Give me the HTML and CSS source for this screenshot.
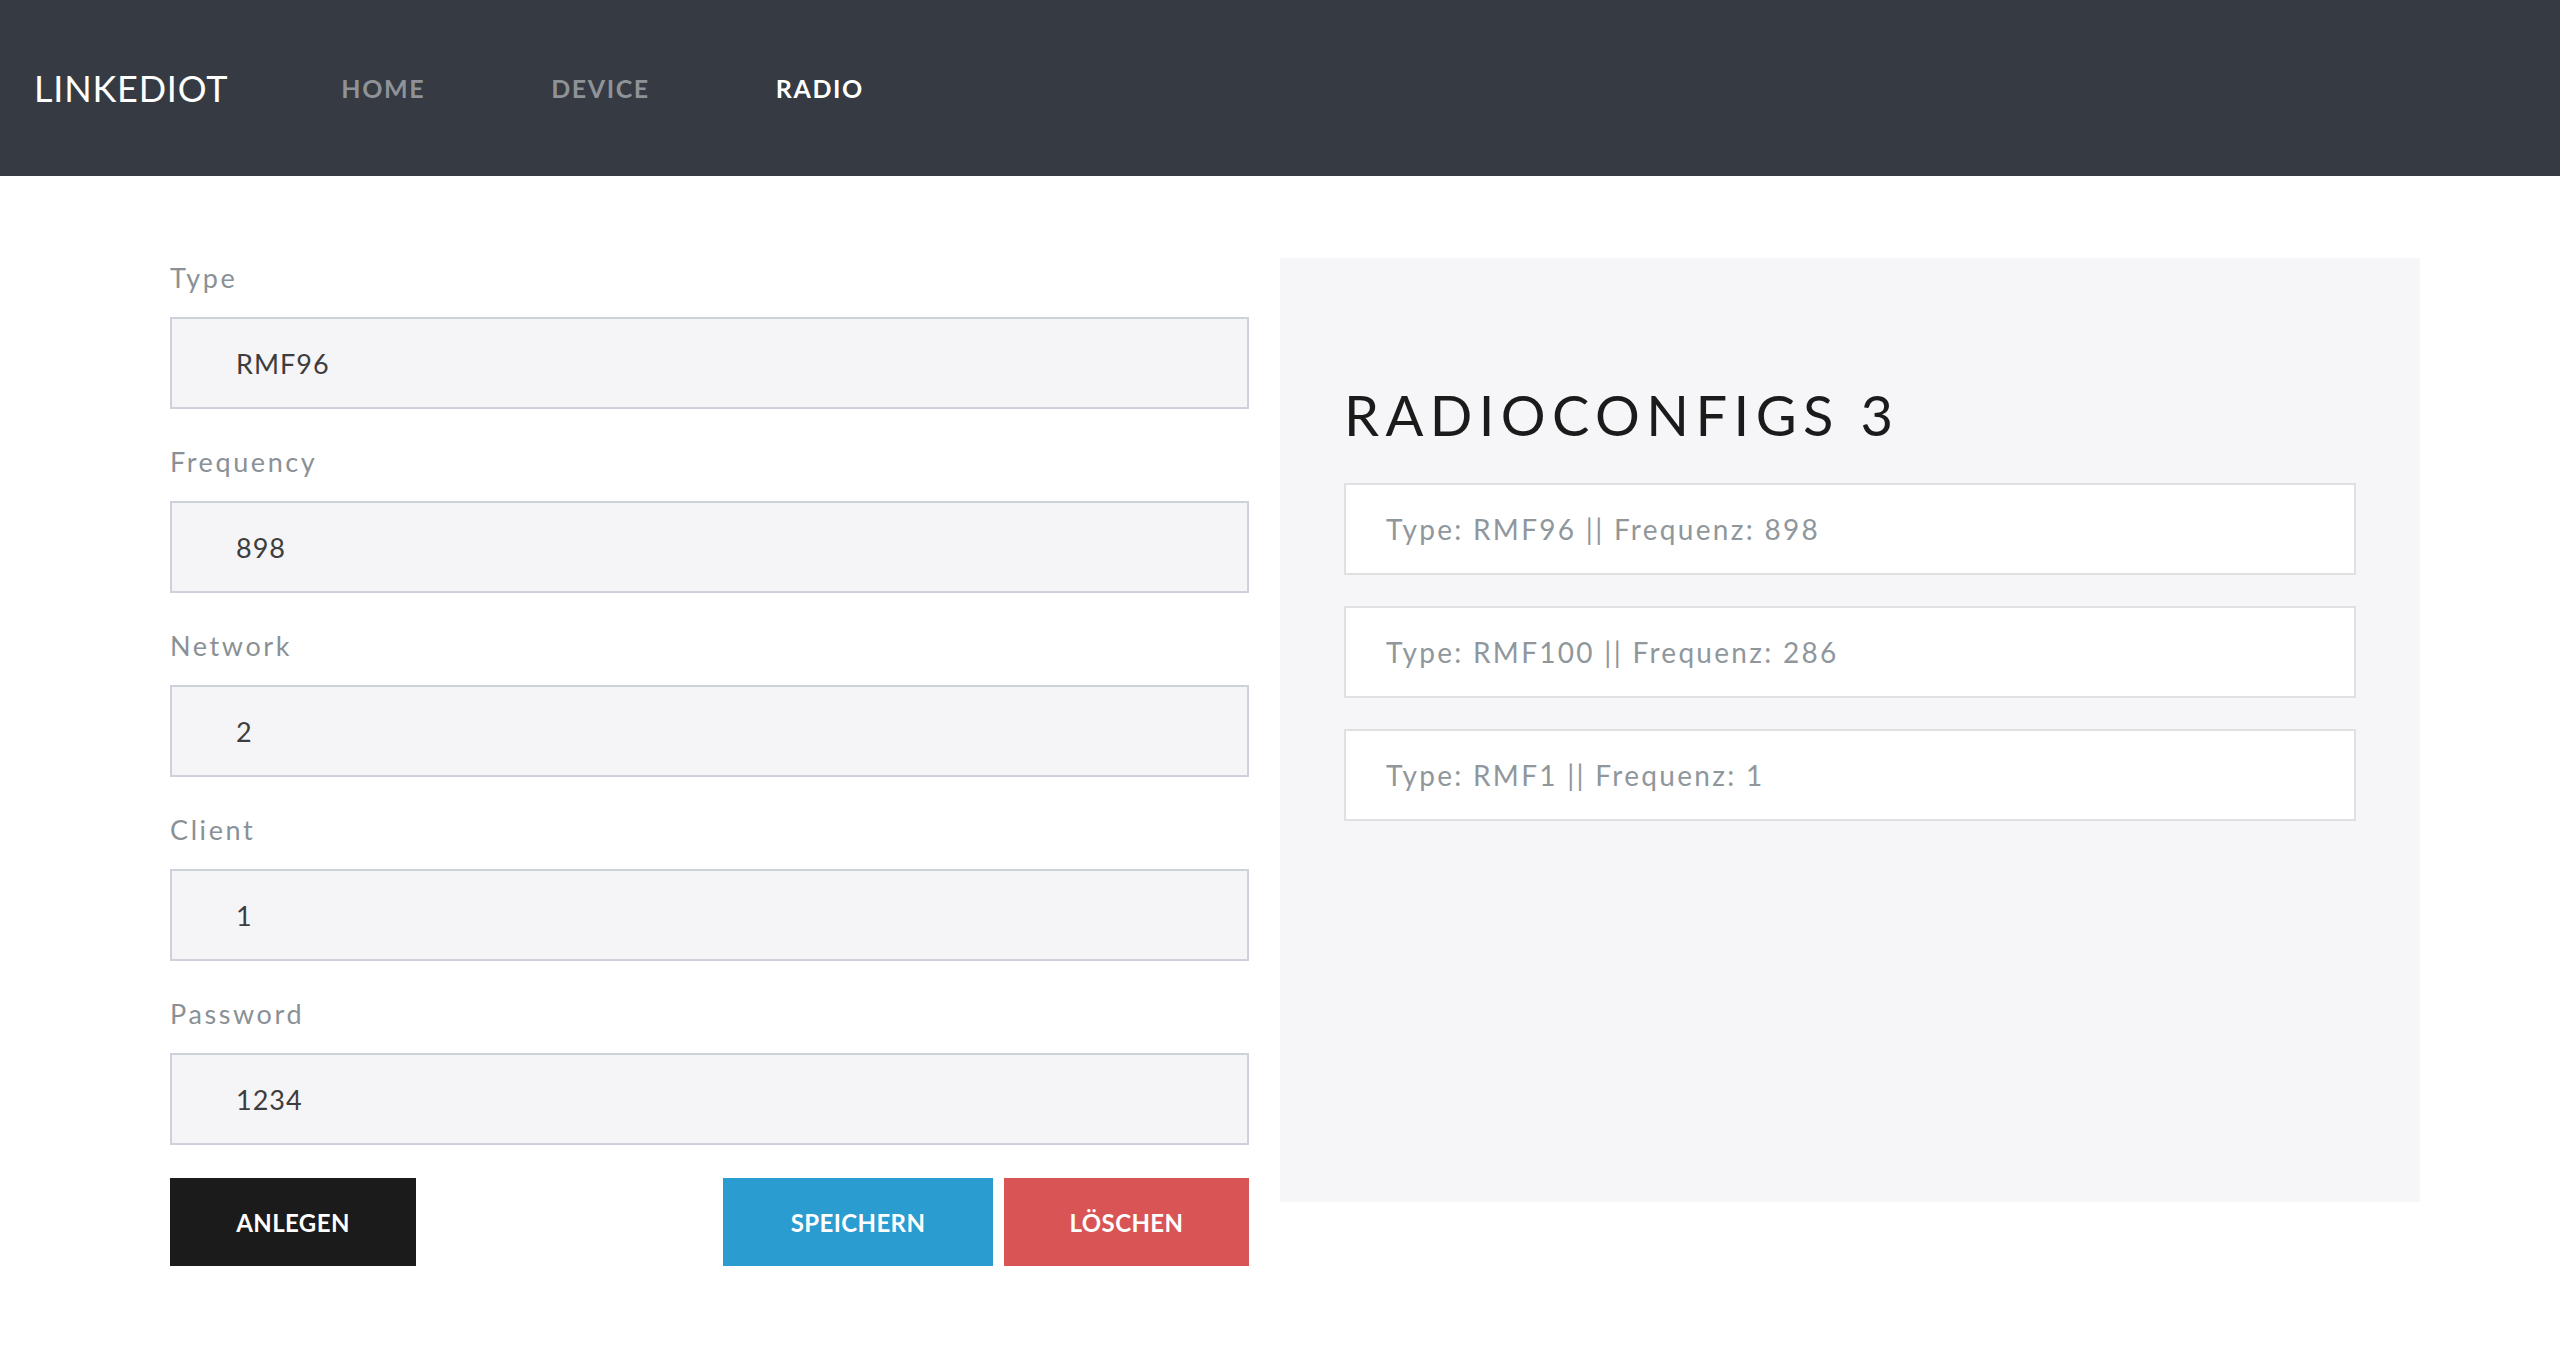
FILE: index.html
```html
<!DOCTYPE html>
<html lang="de">
<head>
<meta charset="utf-8">
<title>LinkedIoT – Radio</title>
<link rel="stylesheet" href="styles.css">
</head>
<body>
<header class="navbar">
  <a class="brand" href="#">LINKEDIOT</a>
  <nav class="nav">
    <a class="nav-link" href="#">HOME</a>
    <a class="nav-link" href="#">DEVICE</a>
    <a class="nav-link active" href="#">RADIO</a>
  </nav>
</header>
<main class="main">
  <form class="form">
    <div class="field">
      <label class="label">Type</label>
      <input class="input" type="text" value="RMF96">
    </div>
    <div class="field">
      <label class="label">Frequency</label>
      <input class="input" type="text" value="898">
    </div>
    <div class="field">
      <label class="label">Network</label>
      <input class="input" type="text" value="2">
    </div>
    <div class="field">
      <label class="label">Client</label>
      <input class="input" type="text" value="1">
    </div>
    <div class="field">
      <label class="label">Password</label>
      <input class="input" type="text" value="1234">
    </div>
    <div class="actions">
      <button class="btn btn-dark" type="button">ANLEGEN</button>
      <div class="actions-right">
        <button class="btn btn-blue" type="button">SPEICHERN</button>
        <button class="btn btn-red" type="button">LÖSCHEN</button>
      </div>
    </div>
  </form>
  <section class="panel">
    <h2 class="panel-title">RADIOCONFIGS 3</h2>
    <ul class="list">
      <li class="list-item">Type: RMF96 || Frequenz: 898</li>
      <li class="list-item">Type: RMF100 || Frequenz: 286</li>
      <li class="list-item">Type: RMF1 || Frequenz: 1</li>
    </ul>
  </section>
</main>
</body>
</html>
```
FILE: styles.css
```css
* { box-sizing: border-box; }
body {
  margin: 0;
  font-family: "Lato", "Open Sans", sans-serif;
  background: #ffffff;
  color: #1b1b1b;
}
.navbar {
  height: 176px;
  background: #363a42;
  display: flex;
  align-items: center;
  padding-left: 34px;
}
.brand {
  color: #ffffff;
  font-size: 36px;
  text-decoration: none;
  letter-spacing: 0.8px;
  margin-right: 50px;
}
.nav { display: flex; }
.nav-link {
  color: #8f9398;
  font-size: 25px;
  font-weight: 700;
  letter-spacing: 1.6px;
  text-decoration: none;
  padding: 0 63px;
}
.nav-link.active { color: #ffffff; }
.main {
  display: flex;
  align-items: flex-start;
  padding: 82px 0 0 170px;
  gap: 31px;
}
.form { width: 1079px; }
.field { margin-bottom: 33px; }
.label {
  display: block;
  font-size: 27px;
  line-height: 40px;
  color: #8a9196;
  letter-spacing: 2.6px;
  margin-bottom: 19px;
}
.input {
  display: block;
  width: 100%;
  height: 92px;
  border: 2px solid #cdd1d9;
  background: #f5f5f8;
  padding: 0 64px;
  font-family: inherit;
  font-size: 27px;
  letter-spacing: 1px;
  color: #3d3d3d;
  outline: none;
}
.actions {
  display: flex;
  justify-content: space-between;
}
.actions-right { display: flex; gap: 11px; }
.btn {
  height: 88px;
  border: none;
  font-family: inherit;
  font-size: 24px;
  font-weight: 700;
  letter-spacing: 0.4px;
  color: #ffffff;
  cursor: pointer;
}
.btn-dark { background: #1b1b1b; width: 246px; }
.btn-blue { background: #2b9ccf; width: 270px; }
.btn-red { background: #d95454; width: 245px; }
.panel {
  width: 1140px;
  height: 944px;
  background: #f6f6f8;
  padding: 123px 64px 0;
}
.panel-title {
  margin: 0 0 35px;
  font-size: 56px;
  line-height: 67px;
  font-weight: 400;
  letter-spacing: 6.4px;
  color: #1b1b1b;
}
.list {
  list-style: none;
  margin: 0;
  padding: 0;
  display: flex;
  flex-direction: column;
  gap: 31px;
}
.list-item {
  height: 92px;
  background: #ffffff;
  border: 2px solid #e0e0e2;
  display: flex;
  align-items: center;
  padding: 0 40px;
  font-size: 28px;
  color: #8f979c;
  letter-spacing: 2.3px;
}
```
